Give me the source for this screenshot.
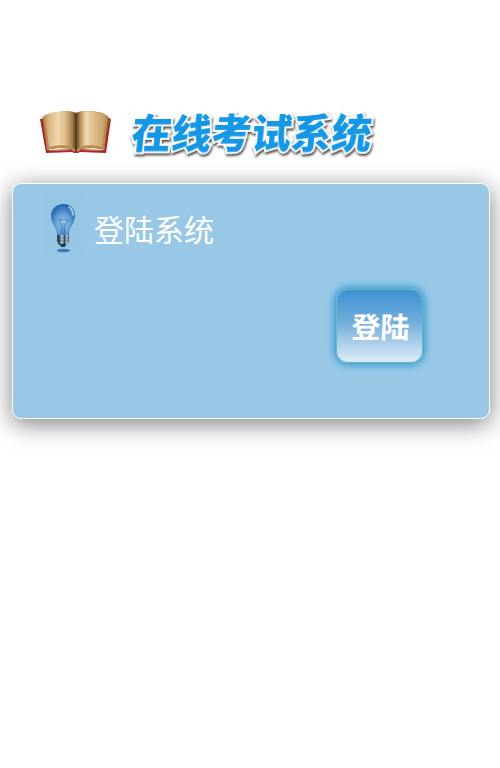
<main>
  <header>
    <svg class="book" width="72" height="46" viewBox="0 0 72 46" aria-hidden="true">
      <defs>
        <linearGradient id="leftPage">
          <stop offset="0" stop-color="#c39c68" />
          <stop offset=".14" stop-color="#dcb985" />
          <stop offset=".42" stop-color="#f0d8ae" />
          <stop offset=".65" stop-color="#dfbd8b" />
          <stop offset=".88" stop-color="#a77e4d" />
          <stop offset="1" stop-color="#51401f" />
        </linearGradient>
        <linearGradient id="rightPage">
          <stop offset="0" stop-color="#51401f" />
          <stop offset=".14" stop-color="#b68c56" />
          <stop offset=".34" stop-color="#f1dab1" />
          <stop offset=".6" stop-color="#dfbd89" />
          <stop offset="1" stop-color="#c19a66" />
        </linearGradient>
      </defs>
      <path d="M0 10h3l5 32 24-1 4 2 4-2 24 1 4-32h3l-5 34-26-1-2 1h-4l-2-1-26 1Z" fill="#b6202b" />
      <path d="M2 9l3-1 4 33 23-1 4 2 4-2 23 1 4-33 3 1-6 33-24-1-4 1-4-1-25 1Z" fill="#8b5b29" />
      <path d="M3 7c3 0 4-1 5-2 10-3 23-4 28-1v38c-6-3-17-4-29-1Z" fill="#b98b50" />
      <path d="M36 4c5-3 18-2 27 0 1 1 3 2 5 3l-4 34c-11-3-22-2-28 1Z" fill="#b98b50" />
      <path d="M5 6C14 2 31 1 36 4v37c-5-5-14-6-27-3Z" fill="url(#leftPage)" />
      <path d="M36 4c5-3 21-2 30 2l-4 32c-12-3-21-2-26 3Z" fill="url(#rightPage)" />
      <path d="M35 4h2v39h-2Z" fill="#55411f" />
    </svg>
    <h1>在线考试系统</h1>
  </header>

  <section class="panel">
    <div class="heading">
      <svg class="bulb" width="40" height="59" viewBox="0 0 40 59" aria-hidden="true">
        <defs>
          <radialGradient id="glass" cx=".5" cy=".63" r=".68">
            <stop offset="0" stop-color="#a3cdea" />
            <stop offset=".45" stop-color="#639fd6" />
            <stop offset=".75" stop-color="#3475bd" />
            <stop offset="1" stop-color="#1958a7" />
          </radialGradient>
          <linearGradient id="metal">
            <stop offset="0" stop-color="#263c4c" />
            <stop offset=".22" stop-color="#40596c" />
            <stop offset=".42" stop-color="#d0e1e8" />
            <stop offset=".62" stop-color="#344e60" />
            <stop offset=".83" stop-color="#c8dce6" />
            <stop offset="1" stop-color="#334f63" />
          </linearGradient>
        </defs>
        <rect width="40" height="59" fill="#91c4e0" opacity=".4" />
        <path d="M20.5 8C13 8 8 13 8 20c0 8 6 11 6 19h12c0-8 6-11 6-19 0-7-4-12-11.5-12Z" fill="url(#glass)" />
        <path d="M26 10c3 1 5 4 5 10l-2-1c0-4-2-6-4-8Z" fill="#c2e1f5" opacity=".8" />
        <path d="m19 39-1-10-2-6m5 16 1-10 3-5m-6 15v-12m2 12v-12m-5-2 3-2 2 1 2-1 3 2" fill="none" stroke="#346ea8" stroke-width=".8" opacity=".8" />
        <path d="M14 39h12v7l-2 3h-8l-2-4Z" fill="url(#metal)" />
        <path d="M14 42h12m-12 3h12m-11 3h9" stroke="#223949" stroke-width=".7" opacity=".65" />
        <path d="M17 48h6l-1 3h-4Z" fill="#263948" />
        <ellipse cx="20.5" cy="54.5" rx="6.5" ry="1.7" fill="#387bb8" />
      </svg>
      <h2>登陆系统</h2>
    </div>
    <button type="button"><span>登陆</span></button>
  </section>
</main>

<style>
  :global(body) {
    margin: 0;
    background: #fff;
  }

  main {
    box-sizing: border-box;
    width: 500px;
    height: 768px;
    padding-top: 109px;
    overflow: hidden;
    font-family: "Noto Sans CJK SC", sans-serif;
  }

  header {
    display: flex;
    height: 74px;
    padding-left: 40px;
  }

  h1,
  h2 {
    margin: 0;
    white-space: nowrap;
  }

  h1 {
    margin-left: 20px;
    color: #1697e5;
    font-size: 40px;
    font-weight: 900;
    line-height: 44px;
    height: 44px;
    transform: skewX(-6deg);
    -webkit-text-stroke: 4px #fff;
    paint-order: stroke fill;
    filter: drop-shadow(1px 2px 1px #514848);
  }

  .panel {
    box-sizing: border-box;
    display: flex;
    flex-direction: column;
    width: 478px;
    height: 236px;
    margin-left: 12px;
    padding: 12px 0 0 30px;
    border: 1px solid #fff;
    border-radius: 9px;
    background: #98c8e5;
    box-shadow: 0 5px 25px rgb(0 0 0 / 50%);
  }

  .heading {
    display: flex;
    height: 93px;
  }

  h2 {
    margin-left: 11px;
    color: #fff;
    font-size: 30px;
    font-weight: 400;
    line-height: 64px;
  }

  button {
    width: 87px;
    height: 74px;
    margin-left: 293px;
    padding: 0 0 0 2px;
    border: 1px solid #67b9bd;
    border-radius: 12px;
    background: linear-gradient(#3c91d3, #72aedb 45%, #d7e8f6 96%);
    box-shadow: 0 0 8px 1px #168bce;
    color: #fff;
    font: 700 29px/72px "Noto Sans CJK SC", sans-serif;
  }

  button span {
    display: block;
    transform: translateY(-1px) skewX(-2deg);
  }
</style>
